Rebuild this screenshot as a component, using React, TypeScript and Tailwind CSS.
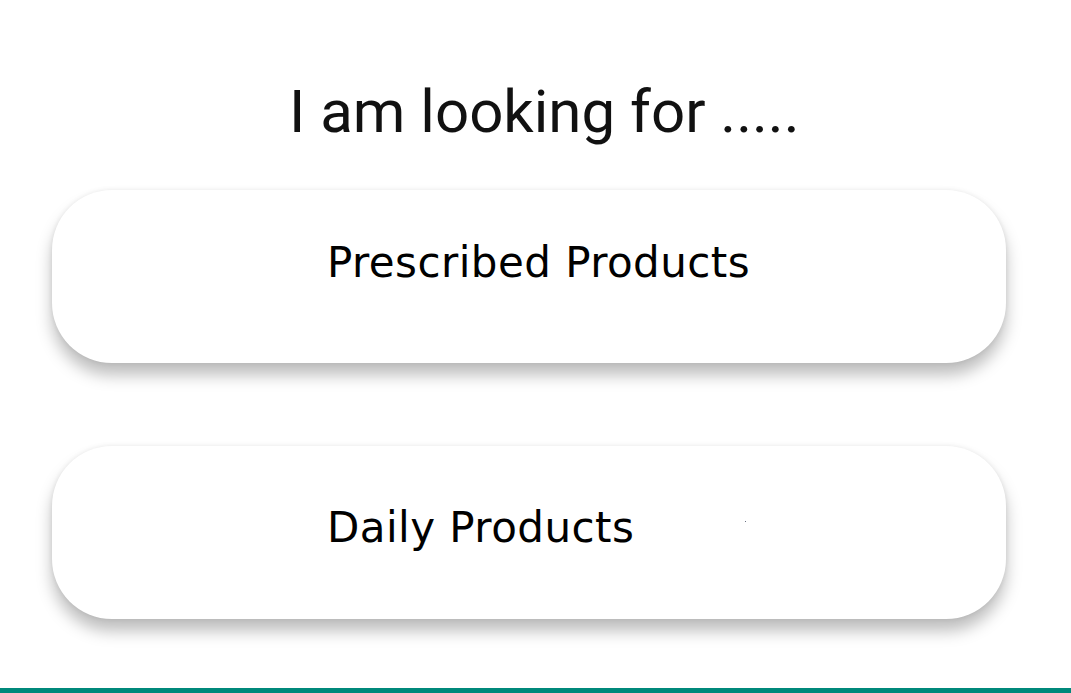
const ChoiceCard = ({ label, padTop }: { label: string; padTop: string }) => {
    return (
        <button
            className={`h-[173px] w-full rounded-[60px] bg-white text-left pl-[275px] flex items-start ${padTop} shadow-[0_12px_16px_rgba(0,0,0,0.26),0_0_5px_rgba(0,0,0,0.08)]`}
        >
            <span className="text-[42px] leading-[49px] tracking-[0.45px] text-black" style={{ fontFamily: '"DejaVu Sans", Verdana, sans-serif' }}>
                {label}
            </span>
        </button>
    );
};

export default function App() {
    return (
        <div className="h-[693px] w-full bg-white flex flex-col overflow-hidden">
            <h1
                className="pt-[77px] pl-[289px] text-[60px] leading-[69px] text-[#111111] font-normal"
                style={{ fontFamily: 'Roboto, "Noto Sans", sans-serif' }}
            >
                I am looking for .....
            </h1>
            <div className="ml-[52px] w-[954px] mt-[44px] flex flex-col gap-[83px]">
                <ChoiceCard label="Prescribed Products" padTop="pt-[48px]" />
                <div className="relative">
                    <ChoiceCard label="Daily Products" padTop="pt-[57px]" />
                    <span className="absolute left-[693px] top-[75px] h-px w-px bg-gray-500"></span>
                </div>
            </div>
            <div className="flex-1"></div>
            <div className="h-[5px] bg-[#00897b]"></div>
        </div>
    );
}
